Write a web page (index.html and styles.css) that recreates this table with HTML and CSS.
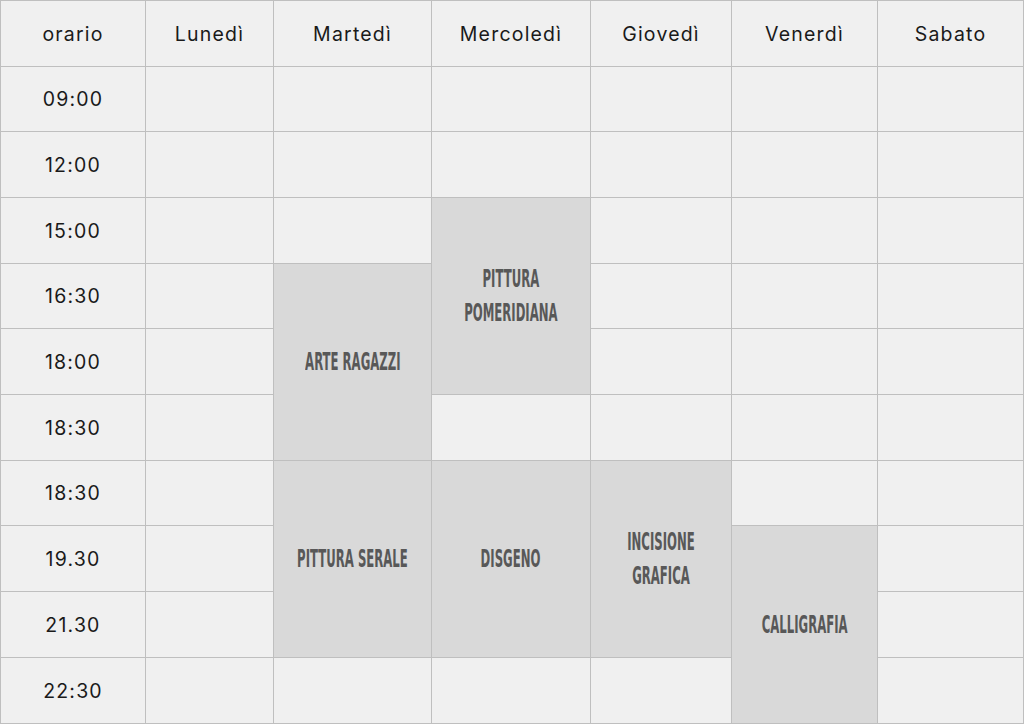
FILE: index.html
```html
<!DOCTYPE html>
<html lang="it">
<head>
<meta charset="utf-8">
<link rel="stylesheet" href="styles.css">
</head>
<body>
<div class="timetable">
  <div class="cell head">orario</div>
  <div class="cell head">Lunedì</div>
  <div class="cell head">Martedì</div>
  <div class="cell head">Mercoledì</div>
  <div class="cell head">Giovedì</div>
  <div class="cell head">Venerdì</div>
  <div class="cell head">Sabato</div>

  <div class="cell time r2">09:00</div>
  <div class="cell r2 c2"></div><div class="cell r2 c3"></div><div class="cell r2 c4"></div><div class="cell r2 c5"></div><div class="cell r2 c6"></div><div class="cell r2 c7"></div>

  <div class="cell time r3">12:00</div>
  <div class="cell r3 c2"></div><div class="cell r3 c3"></div><div class="cell r3 c4"></div><div class="cell r3 c5"></div><div class="cell r3 c6"></div><div class="cell r3 c7"></div>

  <div class="cell time r4">15:00</div>
  <div class="cell r4 c2"></div><div class="cell r4 c3"></div><div class="cell r4 c5"></div><div class="cell r4 c6"></div><div class="cell r4 c7"></div>

  <div class="cell time r5">16:30</div>
  <div class="cell r5 c2"></div><div class="cell r5 c5"></div><div class="cell r5 c6"></div><div class="cell r5 c7"></div>

  <div class="cell time r6">18:00</div>
  <div class="cell r6 c2"></div><div class="cell r6 c5"></div><div class="cell r6 c6"></div><div class="cell r6 c7"></div>

  <div class="cell time r7">18:30</div>
  <div class="cell r7 c2"></div><div class="cell r7 c4"></div><div class="cell r7 c5"></div><div class="cell r7 c6"></div><div class="cell r7 c7"></div>

  <div class="cell time r8">18:30</div>
  <div class="cell r8 c2"></div><div class="cell r8 c6"></div><div class="cell r8 c7"></div>

  <div class="cell time r9">19.30</div>
  <div class="cell r9 c2"></div><div class="cell r9 c7"></div>

  <div class="cell time r10">21.30</div>
  <div class="cell r10 c2"></div><div class="cell r10 c7"></div>

  <div class="cell time r11">22:30</div>
  <div class="cell r11 c2"></div><div class="cell r11 c3"></div><div class="cell r11 c4"></div><div class="cell r11 c5"></div><div class="cell r11 c7"></div>

  <div class="cell event ev-pomeridiana"><span class="ev-text">PITTURA<br>POMERIDIANA</span></div>
  <div class="cell event ev-ragazzi"><span class="ev-text">ARTE RAGAZZI</span></div>
  <div class="cell event ev-serale"><span class="ev-text">PITTURA SERALE</span></div>
  <div class="cell event ev-disegno"><span class="ev-text">DISGENO</span></div>
  <div class="cell event ev-incisione"><span class="ev-text">INCISIONE<br>GRAFICA</span></div>
  <div class="cell event ev-calligrafia"><span class="ev-text">CALLIGRAFIA</span></div>
</div>
</body>
</html>
```

FILE: styles.css
```css
html, body {
  margin: 0;
  padding: 0;
  background: #f0f0f0;
}

.timetable {
  width: 1024px;
  height: 724px;
  box-sizing: border-box;
  display: grid;
  grid-template-columns: 144px 127px 157px 158px 140px 145px 145px;
  grid-template-rows: 65px 64px 65px 65px 64px 65px 65px 64px 65px 65px 65px;
  gap: 1px;
  padding: 1px;
  background: #bfbfbf;
}

.cell {
  background: #f0f0f0;
  display: flex;
  align-items: center;
  justify-content: center;
  font-family: Inter, "Open Sans", sans-serif;
  font-size: 19.5px;
  color: #1a1a1a;
  letter-spacing: 1.2px;
}

.time { grid-column: 1; }
.r2 { grid-row: 2; } .r3 { grid-row: 3; } .r4 { grid-row: 4; } .r5 { grid-row: 5; }
.r6 { grid-row: 6; } .r7 { grid-row: 7; } .r8 { grid-row: 8; } .r9 { grid-row: 9; }
.r10 { grid-row: 10; } .r11 { grid-row: 11; }
.c2 { grid-column: 2; } .c3 { grid-column: 3; } .c4 { grid-column: 4; }
.c5 { grid-column: 5; } .c6 { grid-column: 6; } .c7 { grid-column: 7; }

.event {
  background: #d9d9d9;
  text-align: center;
}

.ev-text {
  display: inline-block;
  font-family: "Liberation Sans Narrow", "DejaVu Sans Condensed", "DejaVu Sans", sans-serif;
  font-stretch: condensed;
  font-weight: bold;
  font-size: 25px;
  line-height: 34px;
  color: #585858;
  letter-spacing: 0;
  transform: scaleX(0.52);
  white-space: nowrap;
}

.ev-pomeridiana { grid-column: 4; grid-row: 4 / span 3; }
.ev-ragazzi { grid-column: 3; grid-row: 5 / span 3; }
.ev-serale { grid-column: 3; grid-row: 8 / span 3; }
.ev-disegno { grid-column: 4; grid-row: 8 / span 3; }
.ev-incisione { grid-column: 5; grid-row: 8 / span 3; }
.ev-calligrafia { grid-column: 6; grid-row: 9 / span 3; }
```
